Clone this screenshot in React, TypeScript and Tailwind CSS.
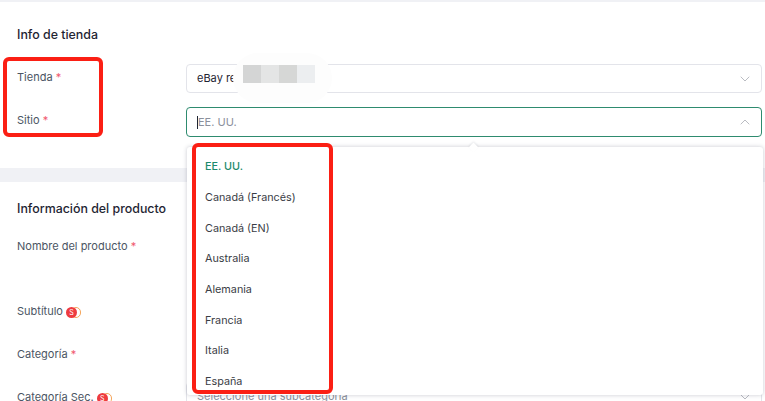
import { ChevronDown, ChevronUp } from 'lucide-react';

const SITES = ['EE. UU.', 'Canadá (Francés)', 'Canadá (EN)', 'Australia', 'Alemania', 'Francia', 'Italia', 'España'];

const Required = () => <span className="text-[#f0596e]">*</span>;

const SBadge = () => (
  <span className="relative inline-block h-[12px] w-[15px] align-[-3px]">
    <span className="absolute left-[5px] top-[1px] h-[11px] w-[10px] rounded-full border border-[#f5a55a]" />
    <span className="absolute left-0 top-[1px] flex h-[11px] w-[11px] items-center justify-center rounded-full bg-[#ee3b3f] text-[7px] leading-none text-white">
      S
    </span>
  </span>
);

const Label = ({ children }: { children: React.ReactNode }) => (
  <div className="w-[169px] shrink-0 text-[11px] leading-[16px] text-[#4b5563]">{children}</div>
);

const SelectBox = ({ focused, children }: { focused?: boolean; children: React.ReactNode }) => (
  <div
    className={`flex flex-1 items-center justify-between rounded-[4px] border bg-white pl-[10px] pr-[8px] text-[11px] ${
      focused ? 'h-[30px] border-[#2e8b6f]' : 'h-[29px] border-[#e3e4ea]'
    }`}
  >
    {children}
    {focused ? (
      <ChevronUp size={16} strokeWidth={1.4} className="text-[#b5b7bd]" />
    ) : (
      <ChevronDown size={16} strokeWidth={1.4} className="text-[#b5b7bd]" />
    )}
  </div>
);

export default function App() {
  return (
    <div className="relative h-[401px] w-[765px] overflow-hidden bg-white font-['Inter',sans-serif]">
      <div className="h-[2px] bg-[#f0f1f5]" />

      {/* Info de tienda */}
      <section className="h-[166px] pl-[17px] pr-[3px] pt-[25px]">
        <h2 className="text-[12.4px] font-medium leading-[16px] text-[#1f2533]">Info de tienda</h2>
        <div className="mt-[21px] flex items-start">
          <div className="pt-[5px]">
            <Label>
              Tienda <Required />
            </Label>
          </div>
          <SelectBox>
            <span className="text-[#1f2533]">eBay re</span>
          </SelectBox>
        </div>
        <div className="mt-[14px] flex items-start">
          <div className="pt-[5px]">
            <Label>
              Sitio <Required />
            </Label>
          </div>
          <SelectBox focused>
            <span className="flex items-center text-[#8b909c]">
              <span className="h-[13px] w-px bg-[#1f2533]" />
              EE. UU.
            </span>
          </SelectBox>
        </div>
      </section>

      <div className="h-[14px] bg-[#f0f1f5]" />

      {/* Información del producto */}
      <section className="pl-[17px] pr-[3px] pt-[19px]">
        <h2 className="text-[12.4px] font-medium leading-[16px] text-[#1f2533]">Información del producto</h2>
        <div className="mt-[21px] h-[65px]">
          <Label>
            Nombre del producto <Required />
          </Label>
        </div>
        <div className="h-[43px]">
          <Label>
            Subtítulo <SBadge />
          </Label>
        </div>
        <div className="h-[36px]">
          <Label>
            Categoría <Required />
          </Label>
        </div>
        <div className="flex items-start">
          <div className="pt-[7px]">
            <Label>
              Categoría Sec. <SBadge />
            </Label>
          </div>
          <SelectBox>
            <span className="text-[#8b909c]">Seleccione una subcategoría</span>
          </SelectBox>
        </div>
      </section>

      {/* Dropdown del sitio */}
      <div className="absolute left-[187px] top-[147px] h-[248px] w-[576px] overflow-hidden rounded-[3px] bg-white pl-[18px] pt-[5px] shadow-[0_0_4px_rgba(60,65,90,0.28)]">
        {SITES.map((site, i) => (
          <div
            key={site}
            className={`flex h-[30.7px] items-center text-[10.8px] ${
              i === 0 ? 'font-medium text-[#1c8a6c]' : 'text-[#3a3d45]'
            }`}
          >
            {site}
          </div>
        ))}
      </div>
      <div className="absolute left-[470px] top-[144px] h-[7px] w-[7px] rotate-45 bg-white shadow-[-1px_-1px_2px_rgba(60,65,90,0.1)]" />

      {/* Mosaico sobre el nombre de la tienda */}
      <div className="absolute left-[233px] top-[53px] h-[50px] w-[99px] rounded-[25px] bg-[#fdfdfd]" />
      <div className="absolute left-[243px] top-[65px] flex h-[18px]">
        <span className="w-[18px] bg-[#d4d5d5]" />
        <span className="w-[18px] bg-[#e4e5e5]" />
        <span className="w-[18px] bg-[#d6d7d6]" />
        <span className="w-[18px] bg-[#eceef0]" />
      </div>

      {/* Marcas rojas */}
      <div className="absolute left-[3px] top-[57px] h-[80px] w-[100px] rounded-[6px] border-[4px] border-[#fb1f14]" />
      <div className="absolute left-[192px] top-[143px] h-[251px] w-[141px] rounded-[6px] border-[4px] border-[#fb1f14]" />
    </div>
  );
}
